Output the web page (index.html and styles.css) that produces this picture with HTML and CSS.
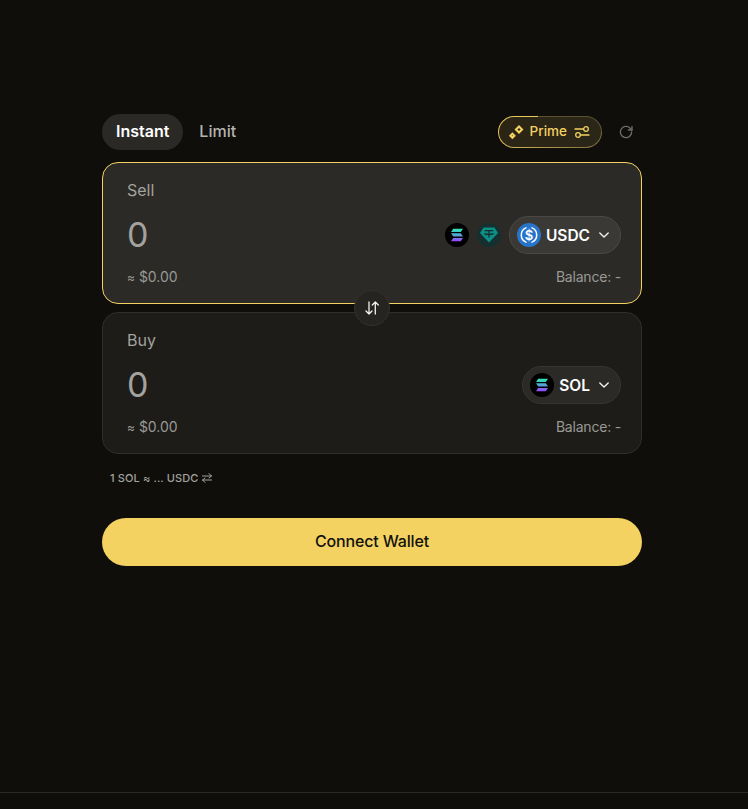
FILE: index.html
```html
<!DOCTYPE html>
<html lang="en">
<head>
    <meta charset="UTF-8">
    <meta name="viewport" content="width=device-width, initial-scale=1.0">
    <title>Swap</title>
    <link rel="stylesheet" href="styles.css">
</head>
<body>
    <main class="swap">
        <div class="topbar">
            <div class="tabs">
                <button class="tab active">Instant</button>
                <button class="tab">Limit</button>
            </div>
            <div class="top-actions">
                <button class="prime">
                    <svg width="16" height="16" viewBox="0 0 16 16" fill="none" stroke="#f3d262" stroke-width="2.1" stroke-linejoin="miter">
                        <path d="M11 2.4 L14 5.4 L11 8.4 L8 5.4 Z"/>
                        <path d="M4.4 9.7 L6.4 11.7 L4.4 13.7 L2.4 11.7 Z"/>
                    </svg>
                    <span class="prime-label">Prime</span>
                    <svg width="16" height="16" viewBox="0 0 16 16" fill="none" stroke="#f3d262" stroke-width="1.3" stroke-linecap="round">
                        <path d="M1 5 H9.5"/>
                        <circle cx="12" cy="5" r="2.3"/>
                        <path d="M15 11 H6.5"/>
                        <circle cx="4" cy="11" r="2.3"/>
                    </svg>
                </button>
                <button class="refresh">
                    <svg width="16" height="16" viewBox="0 0 16 16" fill="none" stroke="#6f6e69" stroke-width="1.3" stroke-linecap="round" stroke-linejoin="round">
                        <path d="M13.6 8 A5.6 5.6 0 1 1 11.9 4 L14 6"/>
                        <path d="M14 2.4 V6 H10.4"/>
                    </svg>
                </button>
            </div>
        </div>

        <div class="cards">
            <section class="card sell">
                <div class="card-label">Sell</div>
                <div class="card-row">
                    <div class="amount">0</div>
                    <div class="tokens">
                        <svg class="quick-token" width="24" height="24" viewBox="0 0 24 24">
                            <defs>
                                <linearGradient id="solA" x1="0" y1="0" x2="0" y2="1">
                                    <stop offset="0" stop-color="#2fe6b0"/>
                                    <stop offset="0.5" stop-color="#4fa8d8"/>
                                    <stop offset="1" stop-color="#9a45fe"/>
                                </linearGradient>
                            </defs>
                            <circle cx="12" cy="12" r="12" fill="#000"/>
                            <path d="M8.2 5.8 H18 L15.8 9.1 H6 Z M6 10.3 H15.8 L18 13.6 H8.2 Z M8.2 14.9 H18 L15.8 18.2 H6 Z" fill="url(#solA)"/>
                        </svg>
                        <svg class="quick-token" width="24" height="24" viewBox="0 0 24 24">
                            <circle cx="12" cy="12" r="12" fill="#15302e"/>
                            <path d="M6.5 4.6 H17.5 L21 10 L12 19.4 L3 10 Z" fill="#0b8f86"/>
                            <path d="M7.6 7.6 H16.4 M12 7.6 V14.6 M7.4 10.6 C9.5 11.8 14.5 11.8 16.6 10.6" fill="none" stroke="#15302e" stroke-width="1.3"/>
                        </svg>
                        <button class="token-btn">
                            <svg width="24" height="24" viewBox="0 0 24 24">
                                <circle cx="12" cy="12" r="12" fill="#2775ca"/>
                                <path d="M9 4.9 A7.7 7.7 0 0 0 9 19.1 M15 4.9 A7.7 7.7 0 0 1 15 19.1" fill="none" stroke="#fff" stroke-width="1.5" stroke-linecap="round"/>
                                <text x="12" y="16.5" text-anchor="middle" class="usdc-sign">$</text>
                            </svg>
                            <span>USDC</span>
                            <svg class="chevron" width="12" height="12" viewBox="0 0 12 12" fill="none" stroke="#f2f2f0" stroke-width="1.4" stroke-linecap="round" stroke-linejoin="round">
                                <path d="M1.8 4 L6 8 L10.2 4"/>
                            </svg>
                        </button>
                    </div>
                </div>
                <div class="card-foot">
                    <span><span class="approx">≈</span> $0.00</span>
                    <span class="balance">Balance: -</span>
                </div>
            </section>

            <button class="flip">
                <svg width="16" height="16" viewBox="0 0 16 16" fill="none" stroke="#f2f2f0" stroke-width="1.3" stroke-linecap="round" stroke-linejoin="round">
                    <path d="M5 2 V14 M2 11 L5 14 L8 11"/>
                    <path d="M11.3 14 V2 M8.3 5 L11.3 2 L14.3 5"/>
                </svg>
            </button>

            <section class="card">
                <div class="card-label">Buy</div>
                <div class="card-row">
                    <div class="amount">0</div>
                    <div class="tokens">
                        <button class="token-btn buy-token">
                            <svg width="24" height="24" viewBox="0 0 24 24">
                                <circle cx="12" cy="12" r="12" fill="#000"/>
                                <path d="M8.2 5.8 H18 L15.8 9.1 H6 Z M6 10.3 H15.8 L18 13.6 H8.2 Z M8.2 14.9 H18 L15.8 18.2 H6 Z" fill="url(#solA)"/>
                            </svg>
                            <span>SOL</span>
                            <svg class="chevron" width="12" height="12" viewBox="0 0 12 12" fill="none" stroke="#f2f2f0" stroke-width="1.4" stroke-linecap="round" stroke-linejoin="round">
                                <path d="M1.8 4 L6 8 L10.2 4"/>
                            </svg>
                        </button>
                    </div>
                </div>
                <div class="card-foot">
                    <span><span class="approx">≈</span> $0.00</span>
                    <span class="balance">Balance: -</span>
                </div>
            </section>
        </div>

        <div class="rate">
            <span>1 SOL ≈ ... USDC</span>
            <svg width="10" height="12" viewBox="0 0 10 12" fill="none" stroke="#a3a29d" stroke-width="1" stroke-linecap="round" stroke-linejoin="round">
                <path d="M0.5 4 H9.5 M7 1.5 L9.5 4 L7 6"/>
                <path d="M9.5 8 H0.5 M3 6 L0.5 8 L3 10.5"/>
            </svg>
        </div>

        <button class="connect">Connect Wallet</button>
    </main>
    <footer class="page-foot"></footer>
</body>
</html>
```

FILE: styles.css
```css
* {
    box-sizing: border-box;
}
html, body {
    height: 100%;
}
body {
    margin: 0;
    background: #0f0e0b;
    font-family: Inter, "Liberation Sans", sans-serif;
    color: #f2f2f0;
    display: flex;
    flex-direction: column;
    overflow: hidden;
}
button {
    font-family: inherit;
    border: none;
    background: none;
    color: inherit;
    padding: 0;
    cursor: pointer;
}
.swap {
    width: 540px;
    margin: 114px 0 0 102px;
    flex: 1;
}
.topbar {
    display: flex;
    justify-content: space-between;
    align-items: center;
    height: 36px;
}
.tabs {
    display: flex;
    align-items: center;
}
.tab {
    height: 36px;
    padding: 0 14px 2px;
    border-radius: 18px;
    font-size: 16px;
    font-weight: 500;
    color: #b5b4af;
}
.tab + .tab {
    margin-left: 2px;
}
.tab.active {
    background: #2a2926;
    color: #fff;
    font-weight: 600;
}
.top-actions {
    display: flex;
    align-items: center;
    gap: 16px;
    padding-right: 8px;
}
.prime {
    display: flex;
    align-items: center;
    gap: 6px;
    height: 32px;
    padding: 0 11px 2px 9px;
    border-radius: 16px;
    border: 1px solid transparent;
    font-size: 13.5px;
    font-weight: 500;
    color: #f3d262;
    background:
        linear-gradient(90deg, #2c2515, #2a2618) padding-box,
        linear-gradient(90deg, #e8c85c 38%, #5d5230 38%) top / 100% 50% no-repeat border-box,
        linear-gradient(90deg, #d9bb58, #7a6c3e) border-box;
}
.prime svg {
    margin-top: 2px;
}
.prime-label {
    margin-right: 1px;
}
.refresh {
    display: flex;
    width: 16px;
    height: 16px;
}
.cards {
    position: relative;
    display: flex;
    flex-direction: column;
    gap: 8px;
    margin-top: 12px;
}
.card {
    height: 142px;
    padding: 17px 20px 16px 24px;
    border: 1px solid #2f2e2b;
    border-radius: 16px;
    background: #1d1c19;
    display: flex;
    flex-direction: column;
}
.card.sell {
    background: #2b2a27;
    border-color: #f3d262;
}
.card-label {
    font-size: 16px;
    line-height: 21px;
    color: #a3a29d;
}
.card-row {
    display: flex;
    justify-content: space-between;
    align-items: center;
    height: 38px;
    margin-top: 15px;
}
.amount {
    font-size: 34px;
    line-height: 38px;
    color: #a3a29d;
}
.tokens {
    display: flex;
    align-items: center;
}
.quick-token {
    margin-right: 8px;
}
.token-btn {
    display: flex;
    align-items: center;
    height: 38px;
    padding: 0 10px 0 7px;
    border: 1px solid #4a4945;
    border-radius: 19px;
    background: #3a3935;
    font-size: 15.5px;
    font-weight: 600;
    color: #fff;
}
.token-btn span {
    margin-left: 5px;
}
.chevron {
    margin-left: 8px;
}
.buy-token {
    background: #2b2a27;
    border-color: #363531;
}
.usdc-sign {
    font-size: 13px;
    font-weight: 600;
    fill: #fff;
}
.card-foot {
    display: flex;
    justify-content: space-between;
    margin-top: auto;
    font-size: 14px;
    line-height: 18px;
    color: #9a9994;
}
.approx {
    font-size: 12px;
}
.balance {
    letter-spacing: -0.2px;
}
.flip {
    position: absolute;
    left: 252px;
    top: 128px;
    width: 36px;
    height: 36px;
    border-radius: 50%;
    border: 1px solid #33322f;
    background: #252421;
    display: flex;
    align-items: center;
    justify-content: center;
}
.rate {
    display: flex;
    align-items: center;
    gap: 4px;
    margin: 16px 0 0 8px;
    height: 16px;
    font-size: 11px;
    font-weight: 500;
    letter-spacing: 0.12px;
    color: #a3a29d;
}
.connect {
    display: block;
    width: 100%;
    height: 48px;
    margin-top: 32px;
    padding-bottom: 2px;
    border-radius: 24px;
    background: #f3d262;
    color: #12110d;
    font-size: 16px;
    font-weight: 500;
    letter-spacing: -0.15px;
}
.page-foot {
    height: 17px;
    border-top: 1px solid #2a2926;
}
```
